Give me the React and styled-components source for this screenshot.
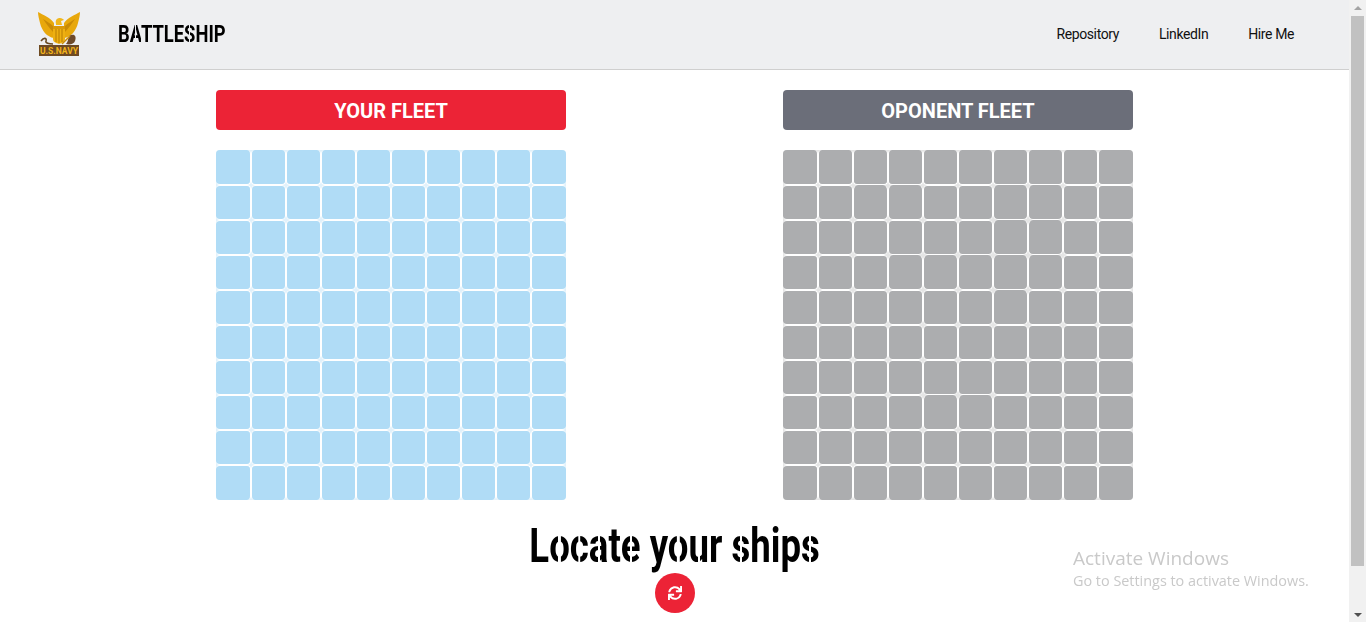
import React from 'react';
import styled, { createGlobalStyle } from 'styled-components';
import { FaSync } from 'react-icons/fa';

const GlobalStyle = createGlobalStyle`
  html, body {
    height: 100%;
    overflow: hidden;
  }
  body {
    margin: 0;
    background: #fff;
    font-family: Roboto, "Liberation Sans", sans-serif;
  }
`;

const Page = styled.div`
  box-sizing: border-box;
  height: 622px;
  padding-right: 17px;
  overflow: hidden;
`;

const Header = styled.header`
  display: flex;
  align-items: center;
  height: 69px;
  padding: 0 55px 0 38px;
  background: #eeeff1;
  border-bottom: 1px solid #cfcfcf;
`;

const LogoSlot = styled.div`
  display: flex;
  margin-bottom: 1px;
`;

const Brand = styled.div`
  margin: 0 0 2px 38px;
  font-size: 24px;
  font-weight: 700;
  white-space: nowrap;
  transform: scaleX(0.765);
  transform-origin: left center;
`;

const Nav = styled.nav`
  display: flex;
  gap: 40px;
  margin: 0 0 2px auto;
`;

const NavLink = styled.a`
  font-size: 14px;
  letter-spacing: -0.4px;
  color: #111;
  text-decoration: none;
`;

const Fleets = styled.main`
  display: flex;
  justify-content: center;
  gap: 217px;
  padding-top: 20px;
`;

const Fleet = styled.section`
  width: 350px;
`;

const FleetTitle = styled.div`
  display: flex;
  align-items: center;
  justify-content: center;
  box-sizing: border-box;
  height: 40px;
  margin-bottom: 20px;
  padding-top: 1px;
  border-radius: 4px;
  background: ${(p) => p.$color};
  color: #fff;
  font-size: 20px;
  font-weight: 700;
`;

const Board = styled.div`
  display: grid;
  grid-template-columns: repeat(10, 35px);
  grid-auto-rows: 35px;
  border-radius: 4px;
  background: ${(p) => p.$tint};
`;

const Cell = styled.div`
  box-sizing: border-box;
  border: 1px solid #fff;
  border-radius: ${(p) => (p.$ship ? '5px' : '4px')};
  background: ${(p) => p.$color};
  ${(p) => p.$ship && 'border-top-width: 0;'}

  &:nth-child(10n + 1) {
    border-left: 0;
  }
  &:nth-child(10n) {
    border-right: 0;
  }
  &:nth-child(-n + 10) {
    border-top: 0;
  }
  &:nth-last-child(-n + 10) {
    border-bottom: 0;
  }
`;

const Footer = styled.div`
  display: flex;
  flex-direction: column;
  align-items: center;
  padding-top: 22px;
`;

const Status = styled.h2`
  margin: 0 0 3px;
  font-size: 48px;
  line-height: 48px;
  font-weight: 700;
  white-space: nowrap;
  transform: scaleX(0.762);
`;

// stencil font stand-in: a thin gap is cut out of the letters that have one
const Letter = styled.span`
  color: ${(p) => (p.$cut ? 'transparent' : '#000')};
  ${(p) =>
    p.$cut &&
    `
    background: linear-gradient(
      90deg,
      #000 calc(50% - ${p.$gap}px),
      transparent calc(50% - ${p.$gap}px),
      transparent calc(50% + ${p.$gap}px),
      #000 calc(50% + ${p.$gap}px)
    );
    -webkit-background-clip: text;
    background-clip: text;
  `}
`;

const ResetButton = styled.button`
  display: flex;
  align-items: center;
  justify-content: center;
  width: 40px;
  height: 40px;
  padding: 0;
  border: 0;
  border-radius: 50%;
  background: #ec2336;
  color: #fff;
  font-size: 14px;
`;

const Watermark = styled.div`
  position: fixed;
  left: 1073px;
  top: 546px;
  font-family: "Open Sans", sans-serif;
  color: #c9c9c9;
`;

const WatermarkTitle = styled.div`
  font-size: 19px;
  line-height: 24px;
`;

const WatermarkText = styled.div`
  font-size: 14.4px;
  line-height: 21px;
`;

const Scrollbar = styled.div`
  position: fixed;
  top: 0;
  right: 0;
  display: flex;
  flex-direction: column;
  align-items: center;
  width: 17px;
  height: 100vh;
  background: #f1f1f1;
`;

const ScrollArrow = styled.div`
  flex: none;
  width: 0;
  height: 0;
  margin: ${(p) => (p.$down ? 'auto 0 5px' : '6px 0 6px')};
  border-left: 4px solid transparent;
  border-right: 4px solid transparent;
  ${(p) => (p.$down ? 'border-top: 4px solid #505050;' : 'border-bottom: 4px solid #a3a3a3;')}
`;

const ScrollThumb = styled.div`
  flex: none;
  width: 13px;
  height: 550px;
  background: #c1c1c1;
`;

const ships = new Set([12, 13, 16, 17, 26, 27, 33, 34, 35, 36, 37, 46, 74, 75]);
const cells = Array.from({ length: 100 }, (_, i) => i);

function StencilText({ text, cuts, gap }) {
  return text.split('').map((ch, i) => (
    <Letter key={i} $cut={cuts.includes(ch)} $gap={gap}>
      {ch}
    </Letter>
  ));
}

function NavyLogo() {
  return (
    <svg width="42" height="44" viewBox="0 0 42 44">
      {/* wings */}
      <path d="M0 0 C5 3 12 5 16 11 L16 26 C9 25 4 19 2 11 C1 7 0 3 0 0Z" fill="#e8a80c" />
      <path d="M42 0 C37 3 30 5 26 11 L26 26 C33 25 38 19 40 11 C41 7 42 3 42 0Z" fill="#e8a80c" />
      <path d="M5 7 C8 11 11 16 15 20 L15 14 C12 11 8 9 5 7Z" fill="#c98a06" />
      <path d="M37 7 C34 11 31 16 27 20 L27 14 C30 11 34 9 37 7Z" fill="#c98a06" />
      {/* head */}
      <path d="M18 12 C17 8 19 6 22 6 C24 6 25 7 26 8 L23 9 L24 13 L18 13Z" fill="#f0b71c" />
      {/* body */}
      <path d="M15 14 H27 V27 C27 30 24 31 21 32 C18 31 15 30 15 27Z" fill="#eeb011" />
      <path d="M18 15 V30 M21 15 V31 M24 15 V30" stroke="#b67c05" strokeWidth="1" />
      <path d="M15 14 H27 V17 H15Z" fill="#d9980a" />
      {/* anchor and ship */}
      <path d="M3 29 C6 25 9 26 8 29 C7 31 11 32 15 32" fill="none" stroke="#6a4a20" strokeWidth="1.6" />
      <path d="M31 24 C36 21 39 24 37 29 C36 32 32 33 28 32 C30 30 30 27 31 24Z" fill="#6e4a2a" />
      <path d="M24 32 L32 24" stroke="#c98a06" strokeWidth="1.4" />
      {/* banner */}
      <rect x="1" y="33" width="40" height="11" fill="#6e4a22" />
      <text
        x="21"
        y="41.5"
        textAnchor="middle"
        fontFamily="Roboto, sans-serif"
        fontSize="8.5"
        fontWeight="700"
        fill="#f2b31a"
      >
        U.S.NAVY
      </text>
    </svg>
  );
}

function App() {
  return (
    <Page>
      <GlobalStyle />
      <Header>
        <LogoSlot>
          <NavyLogo />
        </LogoSlot>
        <Brand>
          <StencilText text="BATTLESHIP" cuts="AS" gap={0.7} />
        </Brand>
        <Nav>
          <NavLink href="#">Repository</NavLink>
          <NavLink href="#">LinkedIn</NavLink>
          <NavLink href="#">Hire Me</NavLink>
        </Nav>
      </Header>
      <Fleets>
        <Fleet>
          <FleetTitle $color="#ec2336">YOUR FLEET</FleetTitle>
          <Board $tint="#e0f1fb">
            {cells.map((i) => (
              <Cell key={i} $color="#b0dcf6" />
            ))}
          </Board>
        </Fleet>
        <Fleet>
          <FleetTitle $color="#6b6e79">OPONENT FLEET</FleetTitle>
          <Board $tint="#e4e4e4">
            {cells.map((i) => (
              <Cell key={i} $color="#acadaf" $ship={ships.has(i)} />
            ))}
          </Board>
        </Fleet>
      </Fleets>
      <Footer>
        <Status>
          <StencilText text="Locate your ships" cuts="ocaeus" gap={1.3} />
        </Status>
        <ResetButton aria-label="Reset">
          <FaSync />
        </ResetButton>
      </Footer>
      <Watermark>
        <WatermarkTitle>Activate Windows</WatermarkTitle>
        <WatermarkText>Go to Settings to activate Windows.</WatermarkText>
      </Watermark>
      <Scrollbar>
        <ScrollArrow />
        <ScrollThumb />
        <ScrollArrow $down />
      </Scrollbar>
    </Page>
  );
}

export default App;
